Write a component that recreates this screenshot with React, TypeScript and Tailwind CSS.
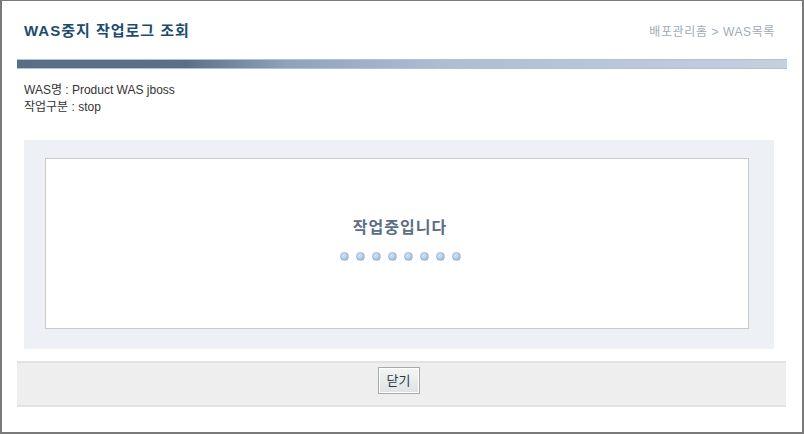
export default function App() {
  const dots = [0, 1, 2, 3, 4, 5, 6, 7];

  return (
    <div className="w-[804px] h-[434px] bg-white border-l-2 border-r-2 border-b-2 border-t border-[#7a7a7a] font-['Liberation_Sans','Noto_Sans_CJK_KR',sans-serif]">
      {/* header */}
      <div className="flex items-end justify-between pl-[22px] pr-[27px] pt-[19px] h-[58px]">
        <h1 className="text-[15px] font-bold text-[#1d4c6e] leading-[20px] tracking-[1px] pb-[18px]">
          WAS중지 작업로그 조회
        </h1>
        <div className="text-[12px] text-[#9eacb3] leading-[16px] tracking-[0.6px] pb-[19px]">
          배포관리홈 &gt; WAS목록
        </div>
      </div>

      {/* bar */}
      <div className="ml-[15px] mr-[15px] h-[10px] border-y border-[#b4c1d0] bg-[linear-gradient(to_right,#586e86_0%,#5a7088_22%,#8ea2bc_35%,#adbdd2_55%,#c4d0e0_100%)]" />

      {/* info */}
      <div className="pl-[22px] pt-[13px] text-[12px] text-[#333] leading-[17px]">
        <div>WAS명 : Product WAS jboss</div>
        <div>작업구분 : stop</div>
      </div>

      {/* panel */}
      <div className="mt-[24px] ml-[22px] mr-[28px] h-[209px] bg-[#edf0f4] pl-[21px] pr-[25px] pt-[18px] pb-[20px]">
        <div className="h-full bg-white border border-[#c8c8c8] flex flex-col items-center pt-[58px] pl-[6px]">
          <div className="text-[16px] font-bold text-[#5a6f86] leading-[22px] tracking-[1px]">작업중입니다</div>
          <div className="flex gap-[7px] mt-[13px]">
            {dots.map((d) => (
              <span
                key={d}
                className="w-[9px] h-[9px] rounded-full border border-[#9fb9d2] bg-[radial-gradient(circle_at_40%_35%,#d8ebfa_0%,#a6c8e6_55%,#86aed3_100%)]"
              />
            ))}
          </div>
        </div>
      </div>

      {/* footer */}
      <div className="mt-[12px] ml-[15px] mr-[16px] h-[46px] bg-[#eeeeee] border-t-2 border-b-2 border-[#e2e2e2] flex justify-center pt-[4px] pr-[6px]">
        <button className="w-[42px] h-[27px] border border-[#a9a9a9] bg-[linear-gradient(to_bottom,#f4f6f6,#dde2e2)] shadow-[inset_0_0_0_1px_#ffffff] text-[13px] text-[#2a3a44] leading-none">
          닫기
        </button>
      </div>
    </div>
  );
}
